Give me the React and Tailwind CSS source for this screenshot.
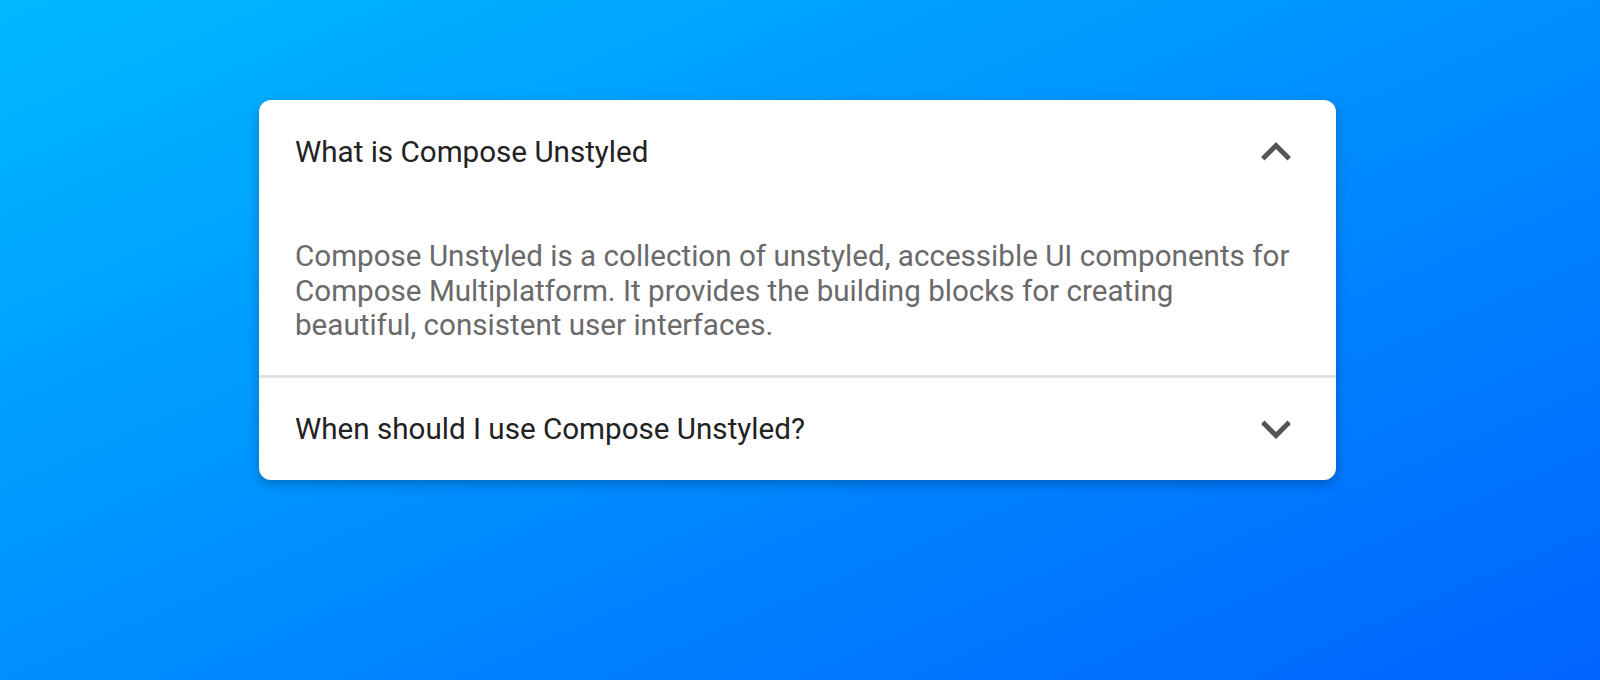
import React from "react";

function Chevron({ up }) {
  return (
    <svg width="60" height="60" viewBox="0 0 24 24" className="shrink-0">
      {up ? (
        <path d="M12 8l-6 6 1.41 1.41L12 10.83l4.59 4.58L18 14z" fill="#555555" />
      ) : (
        <path d="M16.59 8.59L12 13.17 7.41 8.59 6 10l6 6 6-6z" fill="#555555" />
      )}
    </svg>
  );
}

export default function App() {
  return (
    <div
      className="w-full h-[680px] bg-[linear-gradient(to_bottom_right,#00b9ff,#0064ff)] pt-[100px] pl-[259px]"
      style={{ fontFamily: "Roboto, 'Liberation Sans', sans-serif" }}
    >
      <div className="w-[1077px] bg-white rounded-[12px] shadow-[0_4px_12px_rgba(0,0,0,0.25)] overflow-hidden">
        <div className="h-[104px] flex items-center justify-between pl-[36px] pr-[30px]">
          <span className="text-[29.6px] leading-[36px] text-[#222222]">What is Compose Unstyled</span>
          <Chevron up />
        </div>
        <div className="pl-[36px] pr-[41px] pt-[35px] pb-[32px]">
          <p className="text-[29.6px] leading-[34.5px] text-[#6a6a6a]">
            Compose Unstyled is a collection of unstyled, accessible UI components for Compose
            Multiplatform. It provides the building blocks for creating beautiful, consistent user
            interfaces.
          </p>
        </div>
        <div className="h-[3px] bg-[#e2e2e2]" />
        <div className="h-[102px] flex items-center justify-between pl-[36px] pr-[30px]">
          <span className="text-[29.6px] leading-[36px] text-[#222222]">When should I use Compose Unstyled?</span>
          <Chevron />
        </div>
      </div>
    </div>
  );
}
